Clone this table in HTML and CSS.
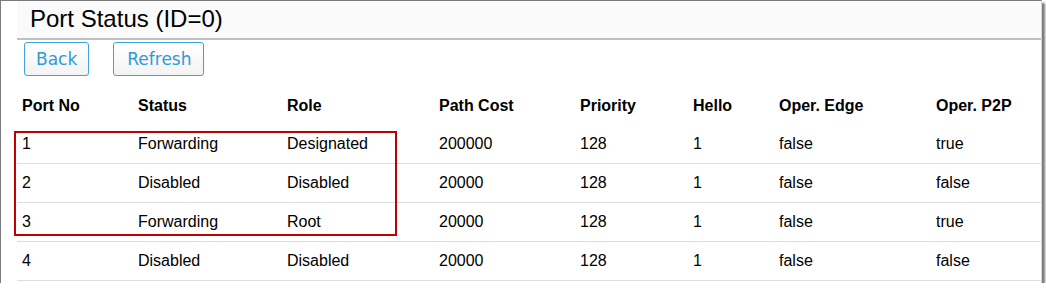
FILE: index.html
```html
<!DOCTYPE html>
<html>
<head>
<meta charset="utf-8">
<link rel="stylesheet" href="styles.css">
</head>
<body>
<div class="frame">
  <div class="content">
    <div class="header"><h1 class="title">Port Status (ID=0)</h1></div>
    <div class="actions">
      <a class="btn">Back</a>
      <a class="btn btn-wide">Refresh</a>
    </div>
    <table class="ports">
      <colgroup>
        <col style="width:116px"><col style="width:149px"><col style="width:152px"><col style="width:141px">
        <col style="width:113px"><col style="width:86px"><col style="width:157px"><col>
      </colgroup>
      <thead>
        <tr><th>Port No</th><th>Status</th><th>Role</th><th>Path Cost</th><th>Priority</th><th>Hello</th><th>Oper. Edge</th><th>Oper. P2P</th></tr>
      </thead>
      <tbody>
        <tr><td>1</td><td>Forwarding</td><td>Designated</td><td>200000</td><td>128</td><td>1</td><td>false</td><td>true</td></tr>
        <tr><td>2</td><td>Disabled</td><td>Disabled</td><td>20000</td><td>128</td><td>1</td><td>false</td><td>false</td></tr>
        <tr><td>3</td><td>Forwarding</td><td>Root</td><td>20000</td><td>128</td><td>1</td><td>false</td><td>true</td></tr>
        <tr><td>4</td><td>Disabled</td><td>Disabled</td><td>20000</td><td>128</td><td>1</td><td>false</td><td>false</td></tr>
      </tbody>
    </table>
  </div>
  <div class="highlight"></div>
</div>
</body>
</html>
```

FILE: styles.css
```css
html, body {
  margin: 0;
  padding: 0;
  background: #ffffff;
}
.frame {
  position: relative;
  width: 1040px;
  height: 282px;
  border-top: 1px solid #7a7a7a;
  border-left: 1px solid #7a7a7a;
  border-right: 1px solid #d8d8d8;
  box-shadow: 3px 3px 2px #7c7c7c;
  overflow: hidden;
  font-family: "Liberation Sans", Arial, sans-serif;
  color: #000;
}
.content {
  padding-left: 16px;
}
.header {
  background: #fafafa;
  height: 37px;
  border-bottom: 2px solid #c0c0c0;
  display: flex;
  align-items: center;
}
.title {
  margin: 0 0 0 13px;
  font-weight: normal;
  font-size: 24px;
  line-height: 30px;
  padding-bottom: 2px;
}
.actions {
  display: flex;
  gap: 24px;
  padding: 2px 0 0 7px;
  height: 34px;
}
.btn {
  display: flex;
  align-items: center;
  box-sizing: border-box;
  height: 34px;
  padding: 0 11px;
  border: 1px solid #3ea3dc;
  border-radius: 3px;
  background: linear-gradient(#ffffff, #f3f3f3);
  color: #2e9bd8;
  font-family: Verdana, "DejaVu Sans", sans-serif;
  font-size: 17px;
  cursor: pointer;
}
.btn.btn-wide {
  padding: 0 12px 0 13px;
}
.ports {
  border-collapse: collapse;
  width: 1024px;
  margin-top: 10px;
  table-layout: fixed;
  font-size: 16px;
}
.ports th {
  text-align: left;
  font-weight: bold;
  height: 39px;
  padding: 0 0 0 5px;
}
.ports td {
  height: 38px;
  padding: 0 0 0 5px;
  border-bottom: 1px solid #dddddd;
}
.highlight {
  position: absolute;
  left: 13px;
  top: 130px;
  width: 379px;
  height: 101px;
  border: 2px solid #c00000;
}
```
